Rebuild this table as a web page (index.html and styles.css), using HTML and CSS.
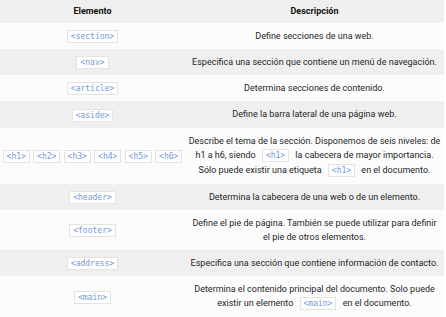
FILE: index.html
```html
<!DOCTYPE html>
<html lang="es">
<head>
<meta charset="utf-8">
<link rel="stylesheet" href="styles.css">
</head>
<body>
<table class="tbl">
  <thead>
    <tr><th class="c1">Elemento</th><th class="c2">Descripción</th></tr>
  </thead>
  <tbody>
    <tr><td class="c1"><code>&lt;section&gt;</code></td><td class="c2">Define secciones de una web.</td></tr>
    <tr><td class="c1"><code>&lt;nav&gt;</code></td><td class="c2">Especifica una sección que contiene un menú de navegación.</td></tr>
    <tr><td class="c1"><code>&lt;article&gt;</code></td><td class="c2">Determina secciones de contenido.</td></tr>
    <tr><td class="c1"><code>&lt;aside&gt;</code></td><td class="c2">Define la barra lateral de una página web.</td></tr>
    <tr><td class="c1"><code>&lt;h1&gt;</code> <code>&lt;h2&gt;</code> <code>&lt;h3&gt;</code> <code>&lt;h4&gt;</code> <code>&lt;h5&gt;</code> <code>&lt;h6&gt;</code></td><td class="c2">Describe el tema de la sección. Disponemos de seis niveles: de h1 a h6, siendo <code>&lt;h1&gt;</code> la cabecera de mayor importancia. Sólo puede existir una etiqueta <code>&lt;h1&gt;</code> en el documento.</td></tr>
    <tr><td class="c1"><code>&lt;header&gt;</code></td><td class="c2">Determina la cabecera de una web o de un elemento.</td></tr>
    <tr><td class="c1"><code>&lt;footer&gt;</code></td><td class="c2">Define el pie de página. También se puede utilizar para definir el pie de otros elementos.</td></tr>
    <tr><td class="c1"><code>&lt;address&gt;</code></td><td class="c2">Especifica una sección que contiene información de contacto.</td></tr>
    <tr><td class="c1"><code>&lt;main&gt;</code></td><td class="c2">Determina el contenido principal del documento. Solo puede existir un elemento <code>&lt;main&gt;</code> en el documento.</td></tr>
  </tbody>
</table>
</body>
</html>
```
FILE: styles.css
```css
html, body {
  margin: 0;
  padding: 0;
  background: #ffffff;
}
.tbl {
  width: 444px;
  border-collapse: collapse;
  font-family: Roboto, "Liberation Sans", sans-serif;
  font-size: 9px;
  color: #1f1f1f;
  table-layout: fixed;
}
.c1 { width: 181px; }
.tbl th {
  background: #efefef;
  font-weight: bold;
  line-height: 15px;
  padding: 4px 2px;
  text-align: center;
  color: #111;
}
.tbl td {
  line-height: 14px;
  padding: 6px 3px;
  text-align: center;
  vertical-align: middle;
}
.tbl td.c1 {
  padding: 6px 0;
  white-space: nowrap;
}
.tbl tbody tr:nth-child(odd) { background: #fcfcfc; }
.tbl tbody tr:nth-child(even) { background: #efefef; }
code {
  display: inline-block;
  font-family: "DejaVu Sans Mono", "Liberation Mono", monospace;
  font-size: 8px;
  line-height: 11px;
  padding: 0 3px;
  background: #ffffff;
  border: 1px solid #e3e3e3;
  color: #7299d6;
  vertical-align: middle;
}
.c1 code { margin: 0 0.5px; }
.c2 code { margin: 1px 4px; }
```
